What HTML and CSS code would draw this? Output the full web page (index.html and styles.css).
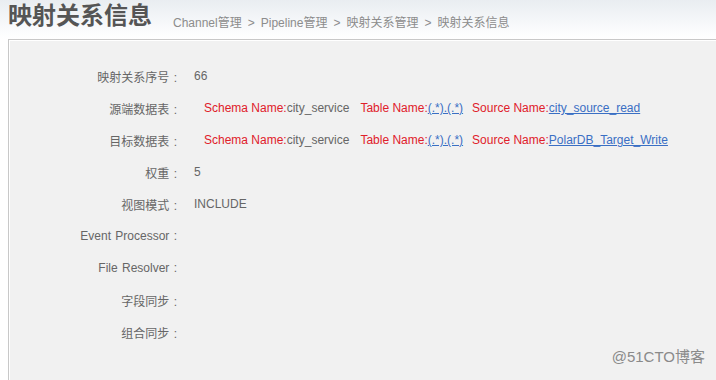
FILE: index.html
```html
<!DOCTYPE html>
<html lang="zh">
<head>
    <meta charset="UTF-8">
    <title>映射关系信息</title>
    <link rel="stylesheet" href="styles.css">
</head>
<body>
    <div class="header">
        <h1 class="title">映射关系信息</h1>
        <div class="crumbs"><span>Channel管理</span><span class="sep">&gt;</span><span>Pipeline管理</span><span class="sep">&gt;</span><span>映射关系管理</span><span class="sep">&gt;</span><span>映射关系信息</span></div>
    </div>

    <div class="panel">
        <div class="row"><div class="label">映射关系序号 :</div><div class="value">66</div></div>
        <div class="row">
            <div class="label">源端数据表 :</div>
            <div class="value indent"><span class="red">Schema Name:</span>city_service<span class="red gap">Table Name:</span><a href="#">(.*).(.*)</a><span class="red gap-s">Source Name:</span><a href="#">city_source_read</a></div>
        </div>
        <div class="row">
            <div class="label">目标数据表 :</div>
            <div class="value indent"><span class="red">Schema Name:</span>city_service<span class="red gap">Table Name:</span><a href="#">(.*).(.*)</a><span class="red gap-s">Source Name:</span><a href="#">PolarDB_Target_Write</a></div>
        </div>
        <div class="row"><div class="label">权重 :</div><div class="value">5</div></div>
        <div class="row"><div class="label">视图模式 :</div><div class="value">INCLUDE</div></div>
        <div class="row"><div class="label">Event Processor :</div><div class="value"></div></div>
        <div class="row"><div class="label">File Resolver :</div><div class="value"></div></div>
        <div class="row"><div class="label">字段同步 :</div><div class="value"></div></div>
        <div class="row"><div class="label">组合同步 :</div><div class="value"></div></div>
    </div>

    <div class="mark">@51CTO博客</div>
</body>
</html>
```

FILE: styles.css
```css
body {
    margin: 0;
    width: 716px;
    height: 380px;
    position: relative;
    overflow: hidden;
    background: #fff;
    font-family: 'Liberation Sans', 'Noto Sans CJK SC', sans-serif;
    font-size: 12px;
    color: #666;
}

.header {
    height: 39px;
    display: flex;
    align-items: center;
    padding-left: 8px;
    background: linear-gradient(#e9edf1, #fbfcfd 80%, #fff);
}

.title {
    margin: 0 21px 0 0;
    font-size: 24px;
    font-weight: bold;
    color: #555;
    line-height: 32px;
    padding-bottom: 7px;
}

.crumbs {
    color: #8c8c8c;
    font-size: 12px;
    padding-top: 3px;
}

.crumbs .sep {
    margin: 0 6px;
}

.panel {
    margin-left: 8px;
    height: 332px;
    border: 1px solid #c8c8c8;
    border-right: none;
    background: #f1f1f1;
    box-shadow: inset 1px 1px 0 #fff;
    padding-top: 20px;
    box-sizing: content-box;
}

.row {
    display: flex;
    height: 32px;
    align-items: center;
}

.label {
    width: 168px;
    text-align: right;
    color: #666;
    word-spacing: 1px;
}

.value {
    margin-left: 17px;
    color: #666;
    white-space: nowrap;
}

.indent {
    padding-left: 10px;
}

.red {
    color: #e0202a;
}

.gap {
    margin-left: 11px;
}

.gap-s {
    margin-left: 9px;
}

.value a {
    color: #3a6fc4;
    text-decoration: underline;
}

.mark {
    position: absolute;
    right: 11px;
    bottom: 14px;
    font-size: 15px;
    color: #8a8a8a;
}
```
